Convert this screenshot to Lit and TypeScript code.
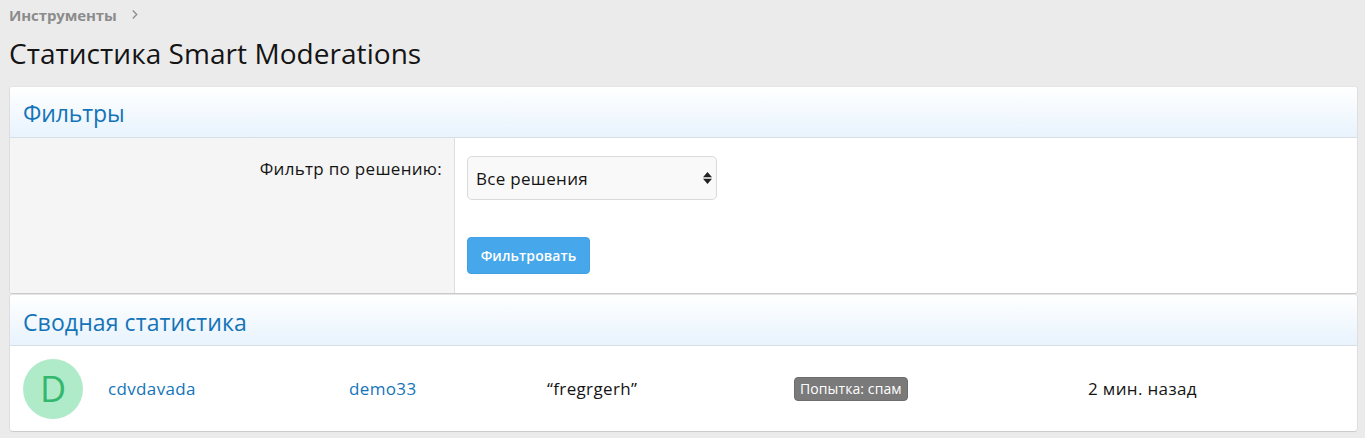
import { LitElement, html, css } from "lit";
import { customElement } from "lit/decorators.js";

@customElement("app-root")
export class AppRoot extends LitElement {
  static styles = css`
    :host {
      display: block;
      height: 438px;
      box-sizing: border-box;
      background: #ebebeb;
      padding: 0 7px 0 9px;
      font-family: "Open Sans", "Noto Sans", sans-serif;
      font-size: 17px;
      color: #141414;
      overflow: hidden;
    }
    .crumbs {
      display: flex;
      align-items: center;
      gap: 15px;
      height: 29px;
      color: #8c8c8c;
      font-size: 15px;
      font-weight: 700;
      letter-spacing: -0.1px;
    }
    .crumbs svg { display: block; }
    h1 {
      margin: 0;
      height: 57px;
      font-size: 28px;
      line-height: 48px;
      font-weight: 400;
      letter-spacing: 0.05px;
    }
    .card {
      background: #fff;
      border: 1px solid #dedede;
      border-top-color: #e4e4e4;
      border-bottom-color: #cbcbcb;
      border-radius: 4px;
      overflow: hidden;
    }
    .head {
      height: 50px;
      border-bottom: 1px solid #d8dee4;
      background: linear-gradient(to bottom, #ffffff, #e8f3fd);
      padding-left: 13px;
      color: #1474b8;
      font-size: 23px;
      line-height: 52px;
      letter-spacing: -0.1px;
    }
    .head.second { line-height: 54px; letter-spacing: 0.1px; }
    .form { display: grid; grid-template-columns: 445px 1fr; height: 155px; }
    .label {
      background: #f5f5f5;
      border-right: 1px solid #dfdfdf;
      text-align: right;
      padding: 20px 12px 0 0;
      line-height: 22px;
      letter-spacing: 0.3px;
    }
    .ctrl {
      display: flex;
      flex-direction: column;
      align-items: flex-start;
      padding: 18px 0 0 12px;
      gap: 37px;
    }
    .select {
      width: 250px;
      height: 44px;
      box-sizing: border-box;
      display: flex;
      align-items: center;
      justify-content: space-between;
      padding: 0 4px 0 8px;
      background: #f9f9f9;
      border: 1px solid #d9d9d9;
      border-radius: 5px;
      letter-spacing: 0.3px;
    }
    .select svg { display: block; }
    .btn {
      width: 123px;
      height: 37px;
      display: flex;
      align-items: center;
      justify-content: center;
      background: #47a7eb;
      border-radius: 4px;
      box-sizing: border-box;
      border: 1px solid #42a0e3;
      color: #fff;
      font-size: 14px;
      font-weight: 600;
      letter-spacing: 0.1px;
    }
    .row { display: flex; align-items: center; height: 85px; }
    .avatar {
      width: 60px;
      height: 60px;
      margin-left: 13px;
      margin-right: 25px;
      flex: none;
      border-radius: 50%;
      background: #b0ebc9;
      color: #33b86e;
      font-size: 36px;
      line-height: 60px;
      text-align: center;
    }
    .cell { flex: none; letter-spacing: 0.35px; }
    a { color: #1474b8; text-decoration: none; }
    .c1 { width: 241px; }
    .c2 { width: 198px; }
    .c3 { width: 247px; }
    .c4 { width: 294px; }
    .badge {
      display: inline-block;
      background: #7a7a7a;
      border: 1px solid #6d6d6d;
      border-radius: 4px;
      color: #fff;
      font-size: 14px;
      line-height: 22px;
      padding: 0 5px;
      letter-spacing: 0.1px;
      vertical-align: middle;
    }
  `;

  render() {
    return html`
      <div class="crumbs">
        <span>Инструменты</span>
        <svg width="6" height="9" viewBox="0 0 6 9"><path d="M.8.6l3.9 3.9L.8 8.4" fill="none" stroke="#8f8f8f" stroke-width="1.4"/></svg>
      </div>
      <h1>Статистика Smart Moderations</h1>
      <section class="card">
        <div class="head">Фильтры</div>
        <div class="form">
          <div class="label">Фильтр по решению:</div>
          <div class="ctrl">
            <div class="select">
              <span>Все решения</span>
              <svg width="9" height="12" viewBox="0 0 9 12"><path d="M4.5 0L9 5.3H0zM4.5 12L0 6.7h9z" fill="#222"/></svg>
            </div>
            <div class="btn">Фильтровать</div>
          </div>
        </div>
      </section>
      <section class="card">
        <div class="head second">Сводная статистика</div>
        <div class="row">
          <div class="avatar">D</div>
          <div class="cell c1"><a href="#">cdvdavada</a></div>
          <div class="cell c2"><a href="#">demo33</a></div>
          <div class="cell c3">“fregrgerh”</div>
          <div class="cell c4"><span class="badge">Попытка: спам</span></div>
          <div class="cell">2 мин. назад</div>
        </div>
      </section>
    `;
  }
}
